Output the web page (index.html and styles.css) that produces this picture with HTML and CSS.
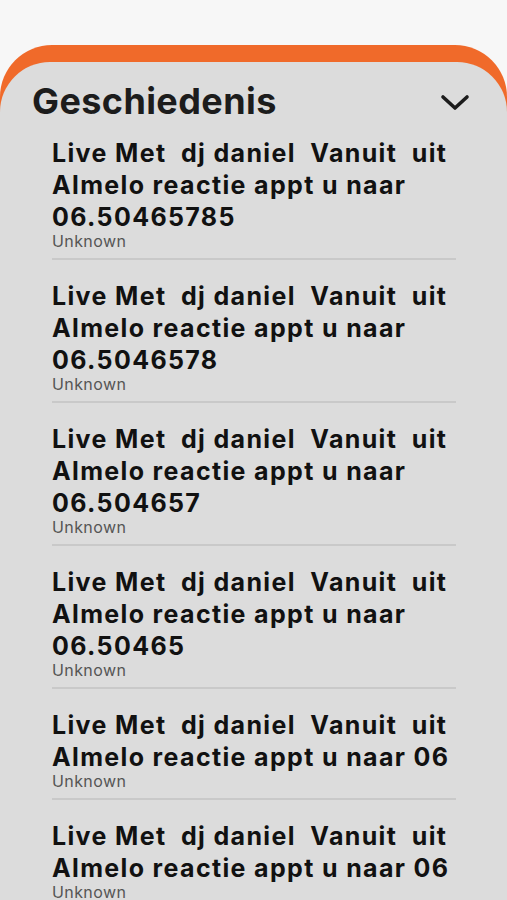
FILE: index.html
```html
<!DOCTYPE html>
<html lang="en">
<head>
    <meta charset="UTF-8">
    <meta name="viewport" content="width=device-width, initial-scale=1.0">
    <title>Geschiedenis</title>
    <link rel="stylesheet" href="styles.css">
</head>
<body>
    <div class="back-sheet">
        <div class="sheet">
            <!-- kop met titel en sluitknop -->
            <div class="sheet-header">
                <h1 class="sheet-title">Geschiedenis</h1>
                <button class="close-btn" aria-label="Sluiten">
                    <svg width="30" height="20" viewBox="0 0 30 20">
                        <path d="M3 4 L15 15 L27 4" fill="none" stroke="#1c1c1c" stroke-width="3.6" stroke-linecap="round" stroke-linejoin="round"/>
                    </svg>
                </button>
            </div>

            <!-- lijst met gespeelde nummers -->
            <ul class="history">
                <li class="history-item">
                    <div class="item-title">Live Met  dj daniel  Vanuit  uit Almelo reactie appt u naar 06.50465785</div>
                    <div class="item-artist">Unknown</div>
                </li>
                <li class="history-item">
                    <div class="item-title">Live Met  dj daniel  Vanuit  uit Almelo reactie appt u naar 06.5046578</div>
                    <div class="item-artist">Unknown</div>
                </li>
                <li class="history-item">
                    <div class="item-title">Live Met  dj daniel  Vanuit  uit Almelo reactie appt u naar 06.504657</div>
                    <div class="item-artist">Unknown</div>
                </li>
                <li class="history-item">
                    <div class="item-title">Live Met  dj daniel  Vanuit  uit Almelo reactie appt u naar 06.50465</div>
                    <div class="item-artist">Unknown</div>
                </li>
                <li class="history-item">
                    <div class="item-title">Live Met  dj daniel  Vanuit  uit Almelo reactie appt u naar 06</div>
                    <div class="item-artist">Unknown</div>
                </li>
                <li class="history-item">
                    <div class="item-title">Live Met  dj daniel  Vanuit  uit Almelo reactie appt u naar 06</div>
                    <div class="item-artist">Unknown</div>
                </li>
            </ul>
        </div>
    </div>
</body>
</html>
```

FILE: styles.css
```css
body {
    margin: 0;
    height: 900px;
    overflow: hidden;
    background-color: #f7f7f7;
    font-family: Inter, "Noto Sans", sans-serif;
    color: #111111;
}

.back-sheet {
    margin-top: 45px;
    height: 855px;
    background-color: #f06a2a;
    border-radius: 52px 52px 0 0;
    padding-top: 17px;
}

.sheet {
    height: 838px;
    background-color: #dcdcdc;
    border-radius: 50px 50px 0 0;
    overflow: hidden;
}

.sheet-header {
    display: flex;
    justify-content: space-between;
    align-items: center;
    padding: 14px 37px 0 32px;
    height: 61px;
}

.sheet-title {
    margin: 0;
    font-size: 36px;
    font-weight: 700;
    line-height: 50px;
    letter-spacing: 0.4px;
    color: #1c1c1c;
    align-self: flex-start;
}

.close-btn {
    border: none;
    background: none;
    padding: 0;
    align-self: flex-start;
    margin-top: 17px;
    display: flex;
}

.history {
    list-style: none;
    margin: 0;
    padding: 0 51px 0 52px;
}

.history-item {
    padding: 20px 0 8px;
    border-bottom: 2px solid #c9c9c9;
}

.history-item:first-child {
    padding-top: 0;
}

.item-title {
    font-size: 25px;
    font-weight: 700;
    line-height: 32px;
    letter-spacing: 1.35px;
    white-space: pre-wrap;
    color: #111111;
}

.item-artist {
    font-size: 16px;
    line-height: 17px;
    letter-spacing: 0.4px;
    color: #555555;
}
```
